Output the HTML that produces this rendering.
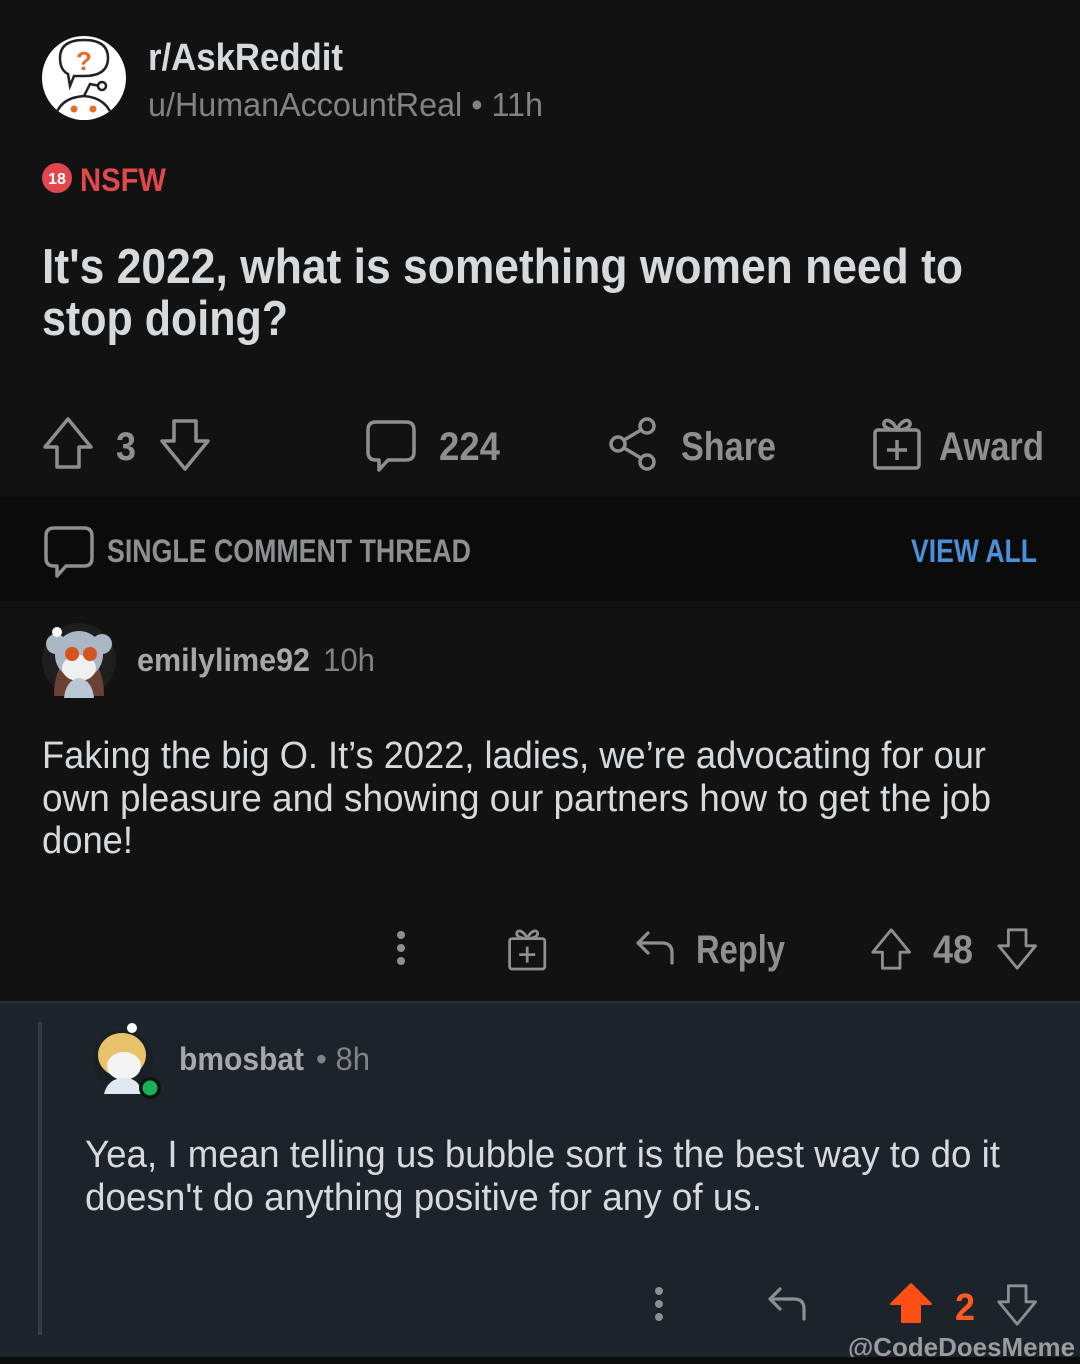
<!DOCTYPE html>
<html><head><meta charset="utf-8"><style>
html,body{margin:0;padding:0;background:#121212;width:1080px;height:1364px;overflow:hidden}
svg{display:block}
text{font-family:"Liberation Sans",Arial,sans-serif}
</style></head><body>
<svg width="1080" height="1364" viewBox="0 0 1080 1364" xmlns="http://www.w3.org/2000/svg">
<defs>
<clipPath id="cc"><circle cx="84" cy="78" r="42"/></clipPath>
<path id="up" d="M24 1 L47 29 L35 29 L35 49 L13 49 L13 29 L1 29 Z" fill="none" stroke="#8d8f91" stroke-width="3.5" stroke-linejoin="round"/>
<path id="dn" d="M24 49 L47 21 L35 21 L35 1 L13 1 L13 21 L1 21 Z" fill="none" stroke="#8d8f91" stroke-width="3.5" stroke-linejoin="round"/>
<g id="gift" fill="none" stroke="#8d8f91" stroke-width="3.5" stroke-linejoin="round">
<rect x="2" y="12" width="44" height="38" rx="3"/>
<path d="M24 12 C20 2 12 0 11 5 C10 10 18 12 24 12 C30 12 38 10 37 5 C36 0 28 2 24 12"/>
<path d="M24 22 V42 M14 32 H34"/>
</g>
<path id="bubble" d="M10 2 H40 Q48 2 48 10 V32 Q48 40 40 40 H22 L13 50 L13 40 H10 Q2 40 2 32 V10 Q2 2 10 2 Z" fill="none" stroke="#8d8f91" stroke-width="3.5" stroke-linejoin="round"/>
<path id="reply" d="M12 2 L2 12 L12 22 M2 12 H26 Q36 12 36 22 V32" fill="none" stroke="#8d8f91" stroke-width="3.2" stroke-linejoin="round" stroke-linecap="round"/>
</defs>

<rect x="0" y="0" width="1080" height="497" fill="#121212"/>
<circle cx="84" cy="78" r="42" fill="#fff"/>
<g clip-path="url(#cc)">
<path d="M60 58 Q60 40 84 40 Q108 40 108 58 Q108 76 84 76 H74 L70 86 L68 74 Q60 70 60 58Z" fill="#fff" stroke="#222" stroke-width="2.5"/>
<text x="84" y="70" font-size="26" font-weight="bold" fill="#e86a2c" text-anchor="middle">?</text>
<path d="M54 124 Q56 98 84 96 Q110 98 114 124 Z" fill="#fff" stroke="#222" stroke-width="2.5"/>
<circle cx="74" cy="109" r="3.5" fill="#e86a2c"/><circle cx="93" cy="109" r="3.5" fill="#e86a2c"/>
<path d="M84 96 L90 84 L100 86" fill="none" stroke="#222" stroke-width="2.5"/><circle cx="102" cy="86" r="4" fill="#fff" stroke="#222" stroke-width="2.5"/>
</g>

<text x="148" y="70" font-size="38" font-weight="bold" fill="#d7dadc" textLength="195" lengthAdjust="spacingAndGlyphs">r/AskReddit</text>
<text x="148" y="116" font-size="33" fill="#818384" textLength="395" lengthAdjust="spacingAndGlyphs">u/HumanAccountReal • 11h</text>

<circle cx="57" cy="178" r="15" fill="#e0484e"/>
<text x="57" y="184" font-size="16" font-weight="bold" fill="#fff" text-anchor="middle">18</text>
<text x="80" y="191" font-size="32" font-weight="bold" fill="#e0484e" textLength="86" lengthAdjust="spacingAndGlyphs">NSFW</text>

<text x="42" y="283" font-size="49" font-weight="bold" fill="#d7dadc" textLength="921" lengthAdjust="spacingAndGlyphs">It's 2022, what is something women need to</text>
<text x="42" y="335" font-size="49" font-weight="bold" fill="#d7dadc" textLength="246" lengthAdjust="spacingAndGlyphs">stop doing?</text>

<use href="#up" x="44" y="418"/>
<text x="116" y="460" font-size="40" font-weight="bold" fill="#8d8f91" textLength="20" lengthAdjust="spacingAndGlyphs">3</text>
<use href="#dn" x="161" y="420"/>
<use href="#bubble" x="366" y="420"/>
<text x="439" y="460" font-size="40" font-weight="bold" fill="#8d8f91" textLength="61" lengthAdjust="spacingAndGlyphs">224</text>
<g fill="none" stroke="#8d8f91" stroke-width="3.5">
<circle cx="647" cy="426" r="7"/><circle cx="618" cy="444" r="7"/><circle cx="647" cy="462" r="7"/>
<path d="M624 440 L641 430 M624 448 L641 458"/>
</g>
<text x="681" y="460" font-size="40" font-weight="bold" fill="#8d8f91" textLength="95" lengthAdjust="spacingAndGlyphs">Share</text>
<use href="#gift" x="873" y="418"/>
<text x="939" y="460" font-size="40" font-weight="bold" fill="#8d8f91" textLength="105" lengthAdjust="spacingAndGlyphs">Award</text>

<rect x="0" y="497" width="1080" height="104" fill="#0b0b0b"/>
<use href="#bubble" x="44" y="526"/>
<text x="107" y="562" font-size="32" font-weight="bold" fill="#8d8f91" textLength="364" lengthAdjust="spacingAndGlyphs">SINGLE COMMENT THREAD</text>
<text x="911" y="562" font-size="32" font-weight="bold" fill="#4a90d9" textLength="126" lengthAdjust="spacingAndGlyphs">VIEW ALL</text>

<rect x="0" y="601" width="1080" height="400" fill="#121212"/>
<circle cx="79" cy="660" r="37" fill="#1e1e1e"/>
<path d="M54 696 Q54 660 79 652 Q104 660 104 696 Z" fill="#6a4032"/>
<circle cx="79" cy="655" r="24" fill="#a9b8c4"/>
<circle cx="56" cy="644" r="10" fill="#a9b8c4"/><circle cx="102" cy="644" r="10" fill="#a9b8c4"/>
<ellipse cx="79" cy="668" rx="17" ry="13" fill="#f0f0f0"/>
<circle cx="72" cy="654" r="7" fill="#d5531e"/><circle cx="90" cy="654" r="7" fill="#d5531e"/>
<path d="M64 698 Q66 680 79 678 Q92 680 94 698 Z" fill="#b8c8d4"/>
<circle cx="57" cy="632" r="5" fill="#fff"/>
<text x="137" y="671" font-size="32" font-weight="bold" fill="#a5a7a9" textLength="173" lengthAdjust="spacingAndGlyphs">emilylime92</text>
<text x="323" y="671" font-size="32" fill="#818384" textLength="52" lengthAdjust="spacingAndGlyphs">10h</text>

<text x="42" y="768" font-size="38" fill="#d7dadc" textLength="944" lengthAdjust="spacingAndGlyphs">Faking the big O. It’s 2022, ladies, we’re advocating for our</text>
<text x="42" y="811" font-size="38" fill="#d7dadc" textLength="949" lengthAdjust="spacingAndGlyphs">own pleasure and showing our partners how to get the job</text>
<text x="42" y="853" font-size="38" fill="#d7dadc" textLength="91" lengthAdjust="spacingAndGlyphs">done!</text>

<g fill="#8d8f91"><circle cx="401" cy="935" r="4"/><circle cx="401" cy="948" r="4"/><circle cx="401" cy="961" r="4"/></g>
<use href="#gift" transform="translate(508,929) scale(0.8)"/>
<use href="#reply" x="636" y="931"/>
<text x="696" y="963" font-size="40" font-weight="bold" fill="#8d8f91" textLength="89" lengthAdjust="spacingAndGlyphs">Reply</text>
<use href="#up" transform="translate(872,929) scale(0.8)"/>
<text x="933" y="963" font-size="40" font-weight="bold" fill="#8d8f91" textLength="40" lengthAdjust="spacingAndGlyphs">48</text>
<use href="#dn" transform="translate(998,929) scale(0.8)"/>

<rect x="0" y="1001" width="1080" height="356" fill="#1d232b"/>
<rect x="0" y="1001" width="1080" height="2" fill="#2a313a"/>
<rect x="38" y="1022" width="4" height="313" fill="#343b44"/>
<circle cx="123" cy="1060" r="30" fill="#1a1f26"/>
<ellipse cx="122" cy="1055" rx="24" ry="22" fill="#e8c26a"/>
<ellipse cx="124" cy="1066" rx="17" ry="14" fill="#f4f4f4"/>
<path d="M104 1094 Q108 1078 124 1078 Q140 1078 142 1094 Z" fill="#dfe9f0"/>
<circle cx="132" cy="1028" r="5" fill="#fff"/>
<circle cx="150" cy="1088" r="11" fill="#0f1114"/><circle cx="150" cy="1088" r="7.5" fill="#1ab15a"/>
<text x="179" y="1070" font-size="32" font-weight="bold" fill="#a5a7a9" textLength="125" lengthAdjust="spacingAndGlyphs">bmosbat</text>
<text x="316" y="1070" font-size="32" fill="#818384" textLength="54" lengthAdjust="spacingAndGlyphs">• 8h</text>

<text x="85" y="1167" font-size="38" fill="#d7dadc" textLength="915" lengthAdjust="spacingAndGlyphs">Yea, I mean telling us bubble sort is the best way to do it</text>
<text x="85" y="1210" font-size="38" fill="#d7dadc" textLength="677" lengthAdjust="spacingAndGlyphs">doesn't do anything positive for any of us.</text>

<g fill="#8d8f91"><circle cx="659" cy="1291" r="4"/><circle cx="659" cy="1304" r="4"/><circle cx="659" cy="1317" r="4"/></g>
<use href="#reply" x="768" y="1287"/>
<path d="M911 1284 L931 1304 L920 1304 L920 1322 L902 1322 L902 1304 L891 1304 Z" fill="#ff4f14" stroke="#ff4f14" stroke-width="2" stroke-linejoin="round"/>
<text x="955" y="1320" font-size="38" font-weight="bold" fill="#ff5a1f" textLength="20" lengthAdjust="spacingAndGlyphs">2</text>
<use href="#dn" transform="translate(998,1285) scale(0.8)"/>
<text x="848" y="1356" font-size="26" font-weight="bold" fill="#9a9c9e" textLength="227" lengthAdjust="spacingAndGlyphs">@CodeDoesMeme</text>
<rect x="0" y="1357" width="1080" height="7" fill="#0b0b0b"/>
</svg>
</body></html>
